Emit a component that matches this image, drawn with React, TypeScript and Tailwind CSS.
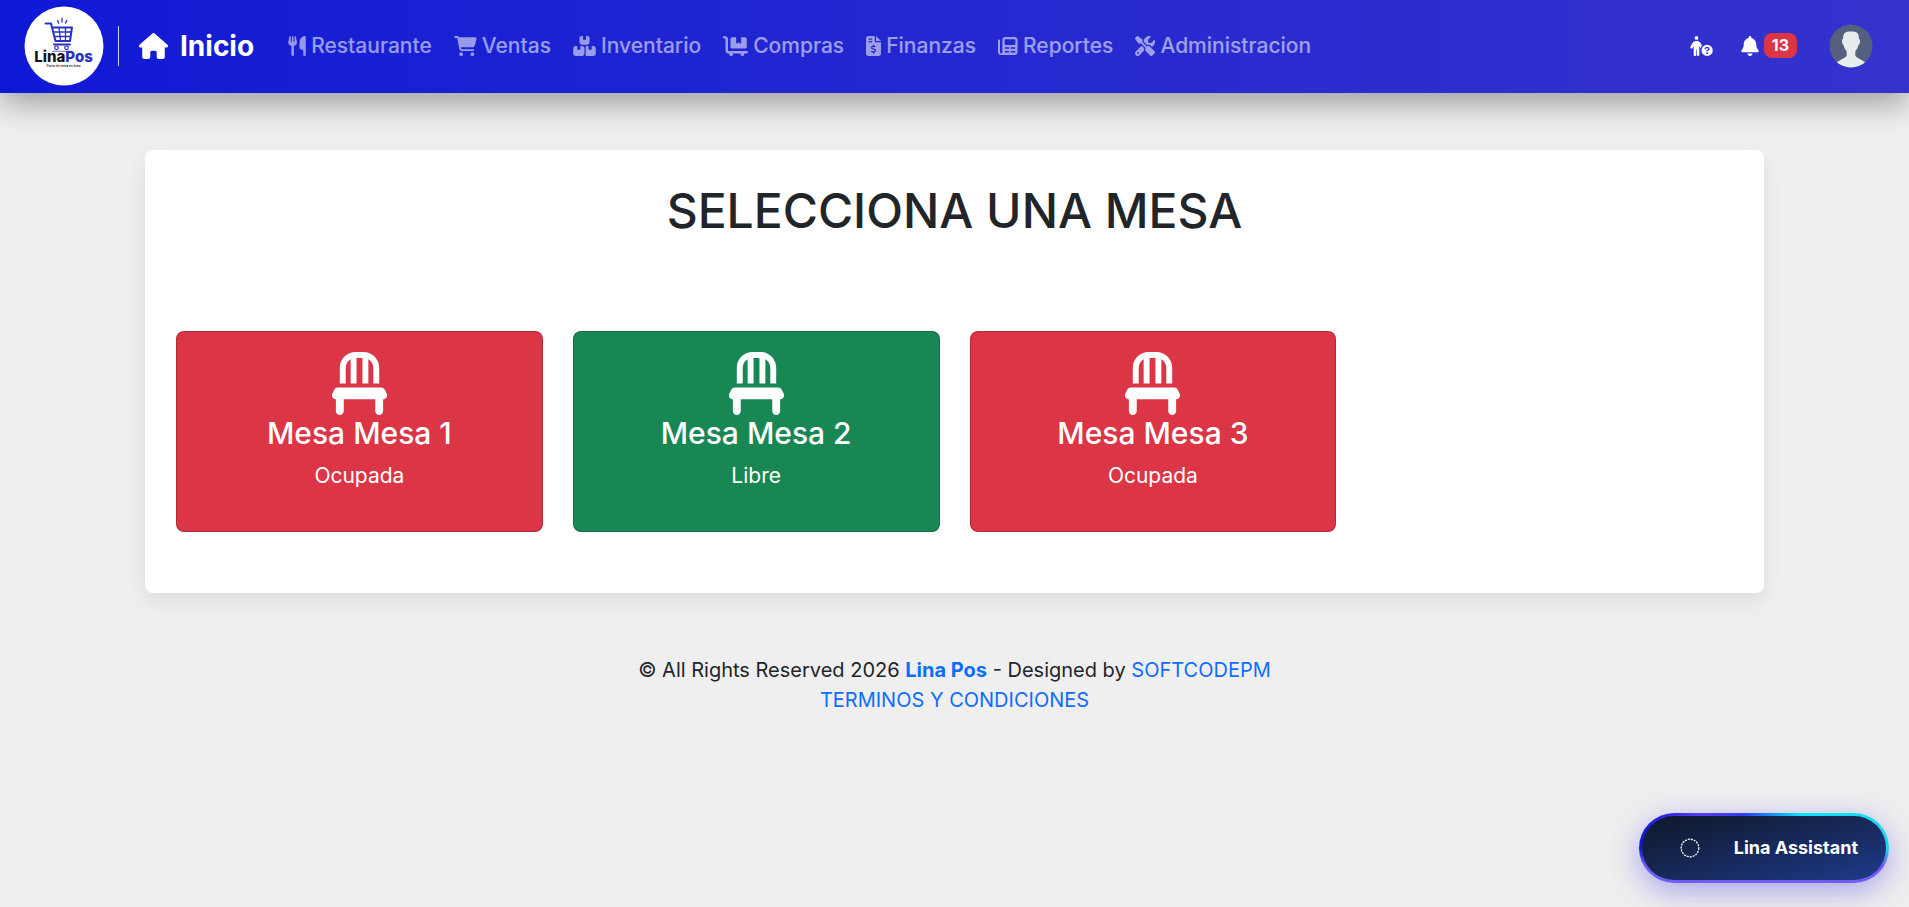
/**
 * Table selection page for the Lina Pos back office
 */

import {
  FaBell,
  FaBoxesStacked,
  FaCartFlatbed,
  FaCartShopping,
  FaChair,
  FaFileInvoiceDollar,
  FaHouse,
  FaPersonCircleQuestion,
  FaScrewdriverWrench,
  FaUtensils,
} from 'react-icons/fa6'

// Newspaper with one wide picture over two rows of text
function NewspaperIcon({ className }: { className?: string }) {
  return (
    <svg viewBox="0 0 20 20" className={className} fill="currentColor" aria-hidden="true">
      <path d="M1 3.5c.6 0 1 .4 1 1v11.5c0 .8.5 1.3 1.2 1.3s1.2-.5 1.2-1.3V4c0-1.7 1.2-2.9 2.9-2.9h9.3c1.7 0 2.9 1.2 2.9 2.9v12c0 1.8-1.3 3.1-3.1 3.1H3.1C1.3 19.1 0 17.8 0 16V4.5c0-.6.4-1 1-1z" />
      <path d="M7.5 3.2h9c.5 0 .9.4.9.9v3.9c0 .5-.4.9-.9.9h-9c-.5 0-.9-.4-.9-.9V4.1c0-.5.4-.9.9-.9zM7 11.2h4v1.5H7zM12.7 11.2h4.5v1.5h-4.5zM7 14.9h4v1.5H7zM12.7 14.9h4.5v1.5h-4.5z" fill="#2225d1" />
    </svg>
  )
}

const navItems = [
  { label: 'Restaurante', icon: FaUtensils, size: 'h-5 w-[18px]' },
  { label: 'Ventas', icon: FaCartShopping, size: 'h-5 w-[23px]' },
  { label: 'Inventario', icon: FaBoxesStacked, size: 'h-5 w-[23px]' },
  { label: 'Compras', icon: FaCartFlatbed, size: 'h-5 w-[25px]' },
  { label: 'Finanzas', icon: FaFileInvoiceDollar, size: 'h-5 w-[15px]' },
  { label: 'Reportes', icon: NewspaperIcon, size: 'h-5 w-5' },
  { label: 'Administracion', icon: FaScrewdriverWrench, size: 'h-5 w-5' },
]

const tables = [
  { name: 'Mesa 1', free: false },
  { name: 'Mesa 2', free: true },
  { name: 'Mesa 3', free: false },
]

function Logo() {
  return (
    <svg viewBox="0 0 80 80" className="size-20" role="img" aria-label="LinaPos">
      <circle cx="40" cy="40" r="39.5" fill="#fff" />
      <g fill="none" stroke="#2a30c4" strokeLinecap="round" strokeLinejoin="round">
        <path d="M21.5 17.5h5.5l4.5 17.5h14.5l2-13.5H28.5" strokeWidth="2" />
        <path d="M29.5 26h17.5M30.5 30.5h16M35 21.5l1.5 13M41.5 21.5v13" strokeWidth="1.3" />
        <path d="M30 38.5h16" strokeWidth="2" />
        <circle cx="32.5" cy="41.8" r="1.8" strokeWidth="1.2" />
        <circle cx="42.5" cy="41.8" r="1.8" strokeWidth="1.2" />
        <path d="M28.5 45.3h18.5" strokeWidth="0.7" />
        <path d="M33.5 14.5l1.3 2.6M38 12.3v3.7M42.8 14.5l-1.3 2.6" strokeWidth="1.3" />
      </g>
      <text x="39.5" y="55.5" textAnchor="middle" fontSize="15" fontWeight="800" fontFamily="Inter, sans-serif" fill="#14141c">
        Lina<tspan fill="#2a30c4">Pos</tspan>
      </text>
      <text x="39.5" y="61" textAnchor="middle" fontSize="3" fontWeight="600" fontFamily="Inter, sans-serif" fill="#14141c">
        Punto de venta en linea
      </text>
    </svg>
  )
}

function Avatar() {
  return (
    <svg viewBox="0 0 44 44" className="size-11" aria-hidden="true">
      <defs>
        <clipPath id="avatar-clip">
          <circle cx="22" cy="22" r="21.5" />
        </clipPath>
      </defs>
      <g clipPath="url(#avatar-clip)">
        <rect width="44" height="44" fill="#556080" />
        <path
          fill="#e7eced"
          d="M14 15c0-6 2-7.5 8-7.5s8 1.5 8 7.5c1 .3 1.2 1.5.9 3.2-.3 1.8-.9 2.8-1.6 3.1-.5 2.7-1.6 4.6-3 6v4.2c.8 2.3 6.7 4 10.7 7.5V45H7v-6c4-3.5 9.9-5.2 10.7-7.5v-4.2c-1.4-1.4-2.5-3.3-3-6-.7-.3-1.3-1.3-1.6-3.1-.3-1.7-.1-2.9.9-3.2z"
        />
      </g>
    </svg>
  )
}

function Navbar() {
  return (
    <header className="flex min-h-[93px] flex-wrap items-center bg-linear-to-r from-[#0f18d5] to-[#3532cd] pr-9 pb-0.5 pl-6 shadow-[0_10px_30px_rgba(0,0,0,0.35)]">
      <a href="#inicio" aria-label="Lina Pos">
        <Logo />
      </a>
      <div className="mr-5 ml-3.5 h-10 w-px bg-white/80" />
      <a href="#inicio" className="flex items-center gap-3 text-[28px] font-bold text-white">
        <FaHouse className="h-[26px] w-[29px]" />
        Inicio
      </a>

      <nav className="ml-[34px] flex flex-wrap gap-[22px]">
        {navItems.map(({ label, icon: Icon, size }) => (
          <a key={label} href={`#${label.toLowerCase()}`} className="flex items-center gap-[5px] text-[21px] font-medium text-white/55">
            <Icon className={size} />
            {label}
          </a>
        ))}
      </nav>

      <div className="ml-auto flex items-center text-xl text-white">
        <button type="button" aria-label="Ayuda">
          <FaPersonCircleQuestion className="h-5 w-[23px]" />
        </button>
        <button type="button" aria-label="Notificaciones" className="ml-7 flex items-center gap-[5px]">
          <FaBell className="h-5 w-[18px]" />
          <span className="rounded-lg bg-[#dc3545] px-2 text-base leading-[25px] font-bold">13</span>
        </button>
        <button type="button" aria-label="Perfil" className="ml-8">
          <Avatar />
        </button>
      </div>
    </header>
  )
}

export default function App() {
  return (
    <div className="min-h-screen bg-[#efefef] font-['Inter',sans-serif] text-[#212529]">
      <Navbar />

      <main className="mx-[145px] mt-[57px] rounded-lg bg-white px-[31px] pt-[31px] pb-[61px] shadow-[0_8px_20px_rgba(0,0,0,0.08)]">
        <h1 className="text-center text-5xl leading-[60px] font-medium">SELECCIONA UNA MESA</h1>

        <div className="mt-[90px] grid grid-cols-2 gap-[30px] lg:grid-cols-4">
          {tables.map((table) => (
            <button
              key={table.name}
              type="button"
              className={`flex h-[201px] flex-col items-center rounded-lg border border-black/20 pt-5 text-white ${table.free ? 'bg-[#198754]' : 'bg-[#dc3545]'}`}
            >
              <FaChair className="text-[63px]" />
              <span className="text-3xl font-medium">Mesa {table.name}</span>
              <span className="mt-2 text-[21px] leading-[34px]">{table.free ? 'Libre' : 'Ocupada'}</span>
            </button>
          ))}
        </div>
      </main>

      <footer className="mt-[62px] text-center text-xl leading-[30px]">
        <p>
          © All Rights Reserved 2026{' '}
          <a href="#linapos" className="font-bold text-[#0d6efd]">Lina Pos</a> - Designed by{' '}
          <a href="#softcodepm" className="text-[#0d6efd]">SOFTCODEPM</a>
        </p>
        <a href="#terminos" className="text-[#0d6efd]">TERMINOS Y CONDICIONES</a>
      </footer>

      {/* Floating chat launcher */}
      <button
        type="button"
        className="fixed right-5 bottom-6 rounded-full shadow-[0_8px_30px_rgba(79,70,229,0.45)]"
      >
        <span className="block rounded-full bg-[linear-gradient(to_bottom,transparent_50%,#6d5cf5_75%),linear-gradient(90deg,#0f18d5,#5b3df0_25%,#2f3df5_42%,#00e5ff_65%,#22d3ee)] p-[3px]">
          <span className="flex h-16 items-center gap-[34px] rounded-full bg-linear-to-br from-[#0f172a] to-[#1e3a8a] pr-7 pl-[38px] text-lg font-bold text-white">
            <svg viewBox="0 0 20 20" className="size-5" aria-hidden="true">
              <circle cx="10" cy="10" r="8.8" fill="none" stroke="#fff" strokeWidth="1.3" strokeDasharray="2 1" />
            </svg>
            Lina Assistant
          </span>
        </span>
      </button>
    </div>
  )
}
